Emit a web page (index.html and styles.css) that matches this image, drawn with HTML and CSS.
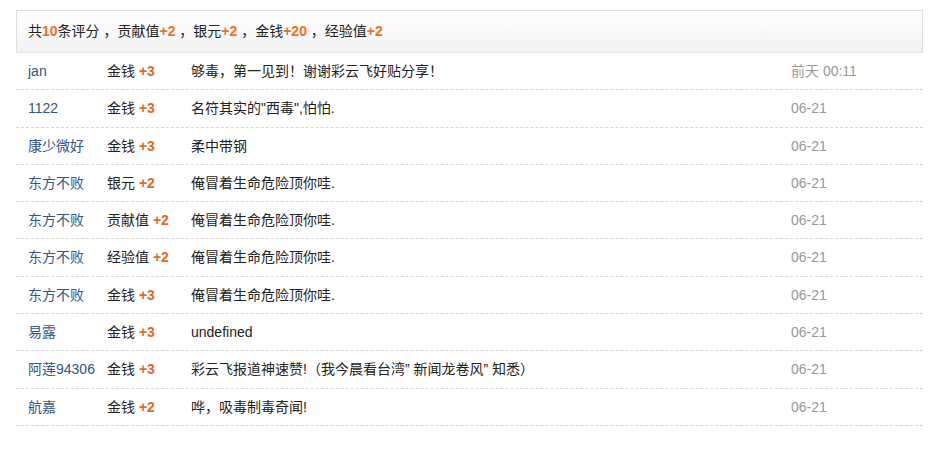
FILE: index.html
```html
<!DOCTYPE html>
<html>
<head>
    <title>评分记录</title>
    <link rel="stylesheet" href="styles.css">
</head>
<body>
    <div class="rate">
        <div class="rate-sum">
            共<b>10</b>条评分 ，贡献值<b>+2</b> ，银元<b>+2</b> ，金钱<b>+20</b> ，经验值<b>+2</b>
        </div>

        <ul class="rate-list">
            <li><span class="user">jan</span><span class="score">金钱 <em>+3</em></span><span class="msg">够毒，第一见到！谢谢彩云飞好贴分享！</span><span class="time">前天 00:11</span></li>
            <li><span class="user">1122</span><span class="score">金钱 <em>+3</em></span><span class="msg">名符其实的"西毒",怕怕.</span><span class="time">06-21</span></li>
            <li><span class="user">康少微好</span><span class="score">金钱 <em>+3</em></span><span class="msg">柔中带钢</span><span class="time">06-21</span></li>
            <li><span class="user">东方不败</span><span class="score">银元 <em>+2</em></span><span class="msg">俺冒着生命危险顶你哇.</span><span class="time">06-21</span></li>
            <li><span class="user">东方不败</span><span class="score">贡献值 <em>+2</em></span><span class="msg">俺冒着生命危险顶你哇.</span><span class="time">06-21</span></li>
            <li><span class="user">东方不败</span><span class="score">经验值 <em>+2</em></span><span class="msg">俺冒着生命危险顶你哇.</span><span class="time">06-21</span></li>
            <li><span class="user">东方不败</span><span class="score">金钱 <em>+3</em></span><span class="msg">俺冒着生命危险顶你哇.</span><span class="time">06-21</span></li>
            <li><span class="user">易露</span><span class="score">金钱 <em>+3</em></span><span class="msg">undefined</span><span class="time">06-21</span></li>
            <li><span class="user">阿莲94306</span><span class="score">金钱 <em>+3</em></span><span class="msg">彩云飞报道神速赞!（我今晨看台湾” 新闻龙卷风” 知悉）</span><span class="time">06-21</span></li>
            <li><span class="user">航嘉</span><span class="score">金钱 <em>+2</em></span><span class="msg">哗，吸毒制毒奇闻!</span><span class="time">06-21</span></li>
        </ul>
    </div>
</body>
</html>
```

FILE: styles.css
```css
body { margin: 0; background: #fff; font-family: "Liberation Sans", Arial, "Noto Sans CJK SC", sans-serif; font-size: 14px; color: #222; }
.rate { width: 907px; margin: 0 0 0 16px; padding-top: 10px; }
.rate-sum { height: 41px; line-height: 41px; padding-left: 11px; border: 1px solid #ddd; border-bottom-color: #e2e2e2; background: linear-gradient(#fff, #f2f2f2); color: #222; }
.rate-sum b { color: #f0701c; }
.rate-list { list-style: none; margin: 0; padding: 0; }
.rate-list li { display: grid; grid-template-columns: 79px 84px 600px 1fr; height: 36.3px; line-height: 36px; padding-left: 12px; border-bottom: 1px dashed #d6d6d6; white-space: nowrap; }
.user { color: #2f5689; }
.score em { font-style: normal; font-weight: bold; color: #e3691f; }
.msg { color: #222; }
.time { color: #999; }
```
